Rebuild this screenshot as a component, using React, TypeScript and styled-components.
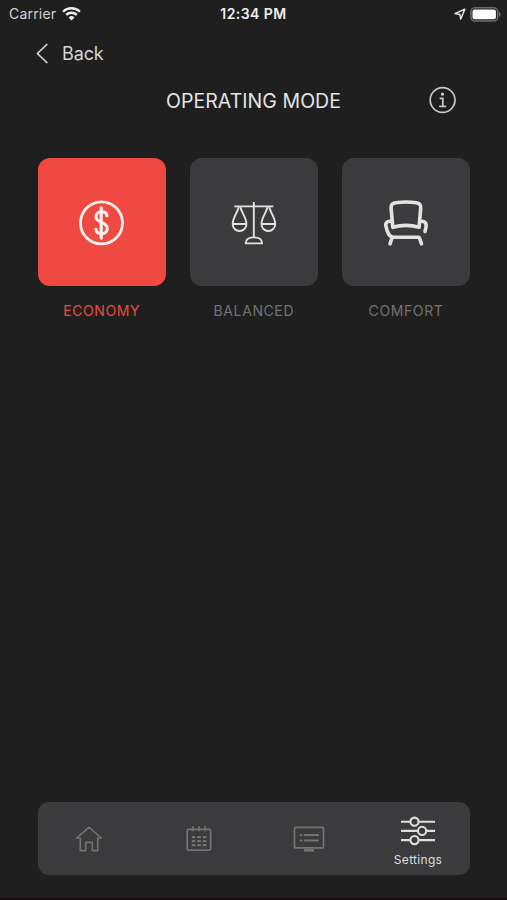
import React from "react";
import styled, { createGlobalStyle } from "styled-components";

const GlobalStyle = createGlobalStyle`
  * { box-sizing: border-box; }
  body { margin: 0; background: #1f1f1f; }
  svg { display: block; flex: none; overflow: visible; }
`;

const Screen = styled.div`
  width: 507px;
  height: 900px;
  display: flex;
  flex-direction: column;
  background: #1f1f1f;
  border-bottom: 2px solid #180d11;
  font-family: Inter, "Liberation Sans", sans-serif;
  color: #e2e2e2;
  overflow: hidden;
`;

const StatusBar = styled.header`
  height: 28px;
  display: grid;
  grid-template-columns: 1fr auto 1fr;
  align-items: center;
  padding: 0 6px;
  font-size: 14px;
  line-height: 28px;
`;

const StatusGroup = styled.div<{ $end?: boolean }>`
  display: flex;
  align-items: center;
  gap: ${(p) => (p.$end ? "4px" : "6px")};
  padding-left: ${(p) => (p.$end ? "0" : "3px")};
  padding-bottom: 2px;
  justify-content: ${(p) => (p.$end ? "flex-end" : "flex-start")};
`;

const Carrier = styled.span`
  width: 47px;
  color: #d2d2d2;
  letter-spacing: 0.2px;
  white-space: nowrap;
`;

const Clock = styled.span`
  padding-bottom: 2px;
  font-size: 14px;
  font-weight: 600;
  letter-spacing: 0.45px;
  color: #eeeeee;
`;

const BackButton = styled.button`
  align-self: flex-start;
  height: 52px;
  display: flex;
  align-items: center;
  gap: 14px;
  margin: 0;
  padding: 0 0 0 36px;
  border: 0;
  background: none;
  color: #d4d4d4;
  font: 400 18px/52px Inter, "Liberation Sans", sans-serif;
  letter-spacing: -0.1px;
`;

const TitleRow = styled.div`
  height: 42px;
  display: grid;
  grid-template-columns: 1fr auto 1fr;
  align-items: center;
  padding: 0 50px;
`;

const Title = styled.h1`
  grid-column: 2;
  margin: 0;
  font-size: 19.5px;
  font-weight: 400;
  line-height: 42px;
  letter-spacing: 0.05px;
  color: #e4e4e4;
`;

const InfoButton = styled.button`
  justify-self: end;
  padding: 0 0 2px;
  border: 0;
  background: none;
  color: #c8c8c8;
`;

const Modes = styled.main`
  display: grid;
  grid-template-columns: repeat(3, 128px);
  justify-content: space-between;
  padding: 36.4px 37px 0 37.7px;
`;

const Mode = styled.div<{ $active?: boolean }>`
  display: flex;
  flex-direction: column;
  align-items: center;
  gap: 13.5px;
  color: ${(p) => (p.$active ? "#ec4b42" : "#737374")};
`;

const Tile = styled.button<{ $active?: boolean }>`
  width: 128px;
  height: 128px;
  display: grid;
  place-items: center;
  padding: 1px 0 0;
  border: 0;
  border-radius: 12px;
  background: ${(p) => (p.$active ? "#f04941" : "#3b3b3d")};
  color: ${(p) => (p.$active ? "#fff1ed" : "#e2e2e2")};
`;

const ModeLabel = styled.span`
  font-size: 14px;
  line-height: 22px;
  letter-spacing: 0.6px;
`;

const TabBar = styled.nav`
  height: 73px;
  display: grid;
  grid-template-columns: repeat(4, 109.7px);
  justify-content: center;
  margin: auto 37px 22.6px 38px;
  border-radius: 11px;
  background: #3b3b3d;
`;

const Tab = styled.button<{ $active?: boolean }>`
  display: flex;
  flex-direction: column;
  align-items: center;
  justify-content: center;
  gap: 7px;
  padding: ${(p) => (p.$active ? "5.200px 1px 0 0" : "1px 0 0")};
  border: 0;
  background: none;
  color: ${(p) => (p.$active ? "#dedede" : "#747475")};
  font: 400 12px/15px Inter, "Liberation Sans", sans-serif;
  letter-spacing: 0.3px;
`;

const WifiIcon = () => (
  <svg width="19" height="14" viewBox="0 0 19 14" fill="none" stroke="#f2f2f2" strokeWidth="2.3">
    <path d="M1.1 4.7a12 12 0 0 1 16.8 0M4.2 7.9a7.6 7.6 0 0 1 10.6 0" />
    <path d="M6.6 10.5a4.2 4.2 0 0 1 5.8 0L9.5 13.5z" fill="#f2f2f2" stroke="none" />
  </svg>
);

const LocationIcon = () => (
  <svg width="12" height="12" viewBox="0 0 12 12" fill="none" stroke="#e6e6e6" strokeWidth="1.5" strokeLinejoin="round">
    <path d="M10.8 1.2 1 5.6l4.9.8.9 4.6z" />
  </svg>
);

const BatteryIcon = () => (
  <svg width="31" height="15" viewBox="0 0 31 15">
    <rect x="0.9" y="0.8" width="26.8" height="13.2" rx="4" fill="none" stroke="#6c6c6c" strokeWidth="1.6" />
    <rect x="2.5" y="2.5" width="23.4" height="9.8" rx="2" fill="#ffffff" />
    <path d="M29 4.8c2.2.8 2.2 4.4 0 5.2z" fill="#6c6c6c" />
  </svg>
);

const BackIcon = () => (
  <svg width="12" height="20" viewBox="0 0 12 20" fill="none" stroke="#d8d8d8" strokeWidth="1.7" strokeLinecap="round" strokeLinejoin="round">
    <path d="M10.8 .5 1.4 9.5l9.4 9" />
  </svg>
);

const InfoIcon = () => (
  <svg width="28" height="28" viewBox="0 0 28 28" fill="none" stroke="currentColor" strokeWidth="1.7">
    <circle cx="13.6" cy="14" r="12.4" />
    <path d="M10.6 12.3h3.2v7.8M10.2 20.4h7" />
    <circle cx="13.5" cy="8.2" r="1.6" fill="currentColor" stroke="none" />
  </svg>
);

const DollarIcon = () => (
  <svg width="46" height="46" viewBox="0 0 46 46" fill="none" stroke="currentColor" strokeWidth="2.8" strokeLinecap="round">
    <circle cx="22.5" cy="22.9" r="21" />
    <path d="M22.2 7.8v30.3" strokeWidth="3.2" />
    <path d="M28 15.8c-.2-2.6-2.2-4-5.3-4-3.4 0-5.7 1.900-5.7 4.900 0 6.700 11.300 4.700 11.300 11.800 0 3.200-2.400 5.200-5.900 5.200-3.300 0-5.300-1.700-5.500-4.500" strokeWidth="3" />
  </svg>
);

const ScalesIcon = () => (
  <svg width="46" height="46" viewBox="0 0 46 46" fill="none" stroke="currentColor" strokeWidth="1.9" strokeLinejoin="round">
    <path d="M3.3 6.400h39M22.800 2v35" />
    <path d="M7.600 7.200c-.6 5-5.900 9.700-5.900 17a6.700 6.700 0 0 0 13.700 0c0-7.300-5.300-12-5.900-17M1.700 24h13.700" />
    <path d="M36.400 7.200c-.6 5-5.900 9.700-5.900 17a6.700 6.700 0 0 0 13.700 0c0-7.300-5.300-12-5.900-17M30.500 24h13.700" />
    <path d="M14.700 43.400c0-3.800 3.200-6 8.200-6s8.200 2.200 8.200 6z" />
  </svg>
);

const ArmchairIcon = () => (
  <svg width="46" height="46" viewBox="0 0 46 46" fill="none" stroke="currentColor" strokeWidth="3.6" strokeLinecap="round" strokeLinejoin="round">
    <path d="M8.100 8c-.3-3.200 1.500-4.700 4.600-5.200 7-1 13.800-1 20.600 0 3.100.5 4.700 2 4.400 5.200l-1.600 19.300c-8.500-2.500-17.800-2.500-26.300 0z" />
    <path d="M8.300 21.400c-4.100-.8-6.200 1.600-5.300 5.200l1.200 4.200c1 3.400 3 6.400 6.600 6.400h25" />
    <path d="M37.300 21.400c4.200-.8 6.500 1.600 5.700 5.500l-1 4.600" />
    <path d="M9 38 7 43.900M36.500 38l2 5.900" />
  </svg>
);

const HomeIcon = () => (
  <svg width="28" height="28" viewBox="0 0 28 28" fill="none" stroke="currentColor" strokeWidth="1.6" strokeLinejoin="round">
    <path d="M14 2.200 1.700 13h3.600v12.600h5.400v-8.200h6.600v8.200h5.400V13h3.600z" />
  </svg>
);

const CalendarIcon = () => (
  <svg width="28" height="28" viewBox="0 0 28 28" fill="none" stroke="currentColor" strokeWidth="1.7">
    <rect x="2.2" y="4.400" width="23.4" height="20.8" rx="1.5" />
    <path d="M7.800 1.200v5M14 1.200v5M20.100 1.200v5" />
    <path d="M6.800 12.200h14.600M6.800 16.200h14.600M6.800 20.100h14.600" strokeWidth="2.2" strokeDasharray="3.6 1.9" />
  </svg>
);

const DisplayIcon = () => (
  <svg width="32" height="28" viewBox="0 0 32 28" fill="none" stroke="currentColor" strokeWidth="1.7">
    <rect x="1.5" y="2.400" width="29" height="20.5" rx="1" />
    <path d="M11 25.200h10" strokeWidth="2.8" />
    <path d="M6.800 9.900H9M6.800 15.600H9M10.800 9.900h15M10.800 15.600h15" strokeWidth="2" />
  </svg>
);

const SlidersIcon = () => (
  <svg width="34" height="28" viewBox="0 0 34 28" fill="none" stroke="currentColor" strokeWidth="2.1">
    <path d="M0 4.700h9.300M17.700 4.700H34M0 13.900h16.900M25.300 13.900H34M0 23.100h9.300M17.700 23.100H34" />
    <circle cx="13.5" cy="4.7" r="4.1" />
    <circle cx="21.1" cy="13.9" r="4.1" />
    <circle cx="13.5" cy="23.1" r="4.1" />
  </svg>
);

const modes = [
  { label: "ECONOMY", icon: <DollarIcon />, active: true },
  { label: "BALANCED", icon: <ScalesIcon />, active: false },
  { label: "COMFORT", icon: <ArmchairIcon />, active: false },
];

export default function App() {
  return (
    <>
      <GlobalStyle />
      <Screen>
        <StatusBar>
          <StatusGroup>
            <Carrier>Carrier</Carrier>
            <WifiIcon />
          </StatusGroup>
          <Clock>12:34 PM</Clock>
          <StatusGroup $end>
            <LocationIcon />
            <BatteryIcon />
          </StatusGroup>
        </StatusBar>
        <BackButton>
          <BackIcon />
          Back
        </BackButton>
        <TitleRow>
          <Title>OPERATING MODE</Title>
          <InfoButton aria-label="Information">
            <InfoIcon />
          </InfoButton>
        </TitleRow>
        <Modes>
          {modes.map((m) => (
            <Mode key={m.label} $active={m.active}>
              <Tile $active={m.active} aria-label={m.label}>
                {m.icon}
              </Tile>
              <ModeLabel>{m.label}</ModeLabel>
            </Mode>
          ))}
        </Modes>
        <TabBar>
          <Tab aria-label="Home">
            <HomeIcon />
          </Tab>
          <Tab aria-label="Schedule">
            <CalendarIcon />
          </Tab>
          <Tab aria-label="Display">
            <DisplayIcon />
          </Tab>
          <Tab $active>
            <SlidersIcon />
            Settings
          </Tab>
        </TabBar>
      </Screen>
    </>
  );
}
